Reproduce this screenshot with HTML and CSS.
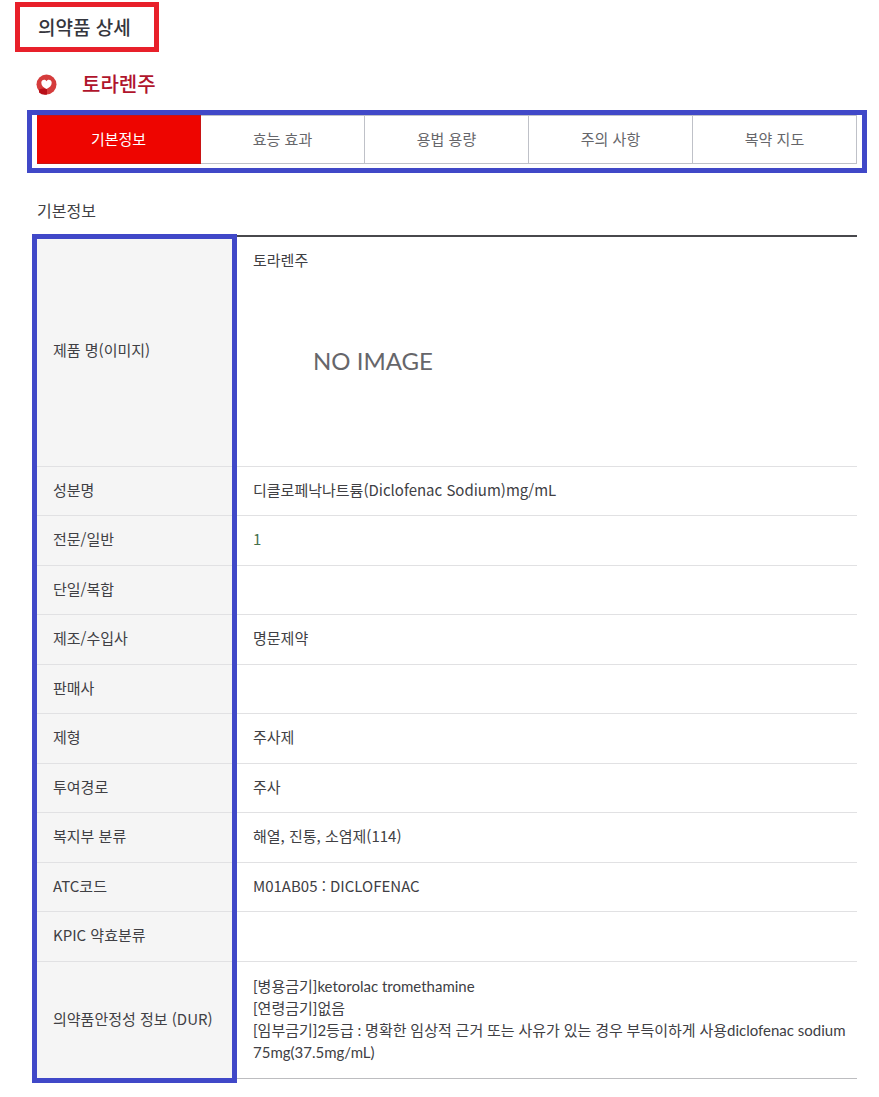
FILE: index.html
```
<!DOCTYPE html>
<html lang="ko">
<head>
<meta charset="utf-8">
<meta name="viewport" content="width=device-width, initial-scale=1">
<title>의약품 상세</title>
<link rel="stylesheet" href="styles.css">
</head>
<body>
<main class="page">
  <h1 class="page-title">의약품 상세</h1>
  <div class="product">
    <svg class="product-icon" viewBox="0 0 22 22" aria-hidden="true">
      <circle cx="10.5" cy="11.5" r="10" fill="#d53c3c"/>
      <path d="M3 16.5Q7 14.8 11 16V21.4Q6.5 22.5 3 19.5Z" fill="#b80f18"/>
      <path d="M10.5 16C7.5 14.8 5.3 12.6 5.3 9.8C5.3 6.8 8.8 5.8 10.5 8.2C12.2 5.8 15.7 6.8 15.7 9.8C15.7 12.6 13.5 14.8 10.5 16Z" fill="#fff"/>
    </svg>
    <h2 class="product-name">토라렌주</h2>
  </div>
  <nav class="tabs">
    <a class="tab tab-active" href="#basic" aria-current="page">기본정보</a>
    <a class="tab" href="#effect">효능 효과</a>
    <a class="tab" href="#dosage">용법 용량</a>
    <a class="tab" href="#caution">주의 사항</a>
    <a class="tab" href="#guide">복약 지도</a>
  </nav>
  <section class="details" id="basic">
    <h3 class="details-title">기본정보</h3>
    <div class="table-wrap">
      <table class="info">
        <tbody>
          <tr class="row-image"><th scope="row">제품 명(이미지)</th><td><div class="media"><span>토라렌주</span><div class="no-image">NO IMAGE</div></div></td></tr>
          <tr><th scope="row">성분명</th><td>디클로페낙나트륨(Diclofenac Sodium)mg/mL</td></tr>
          <tr><th scope="row">전문/일반</th><td><span class="code">1</span></td></tr>
          <tr><th scope="row">단일/복합</th><td></td></tr>
          <tr><th scope="row">제조/수입사</th><td>명문제약</td></tr>
          <tr><th scope="row">판매사</th><td></td></tr>
          <tr><th scope="row">제형</th><td>주사제</td></tr>
          <tr><th scope="row">투여경로</th><td>주사</td></tr>
          <tr><th scope="row">복지부 분류</th><td>해열, 진통, 소염제(114)</td></tr>
          <tr><th scope="row">ATC코드</th><td>M01AB05 : DICLOFENAC</td></tr>
          <tr><th scope="row">KPIC 약효분류</th><td></td></tr>
          <tr class="row-dur"><th scope="row">의약품안정성 정보 (DUR)</th><td>[병용금기]ketorolac tromethamine<br>[연령금기]없음<br>[임부금기]2등급 : 명확한 임상적 근거 또는 사유가 있는 경우 부득이하게 사용diclofenac sodium 75mg(37.5mg/mL)</td></tr>
        </tbody>
      </table>
      <div class="column-frame"></div>
    </div>
  </section>
</main>
</body>
</html>
```
FILE: styles.css
```
* { box-sizing: border-box; }

body {
  margin: 0;
  background: #fff;
  color: #404044;
  font-family: "Noto Sans CJK KR", sans-serif;
  font-size: 15px;
  line-height: 22px;
}

h1, h2, h3 { margin: 0; }

.page { padding: 2px 12px 14px 15px; }

.page-title {
  width: fit-content;
  padding: 5px 23px 5px 18px;
  border: 5px solid #e8202a;
  color: #35363d;
  font-size: 19px;
  font-weight: 500;
  line-height: 30px;
}

.product {
  display: flex;
  align-items: center;
  gap: 24px;
  margin: 17px 0 11px 21px;
}

.product-icon { width: 22px; height: 22px; }

.product-name {
  color: #b0142c;
  font-size: 20px;
  font-weight: 500;
  line-height: 30px;
}

.tabs {
  display: flex;
  margin-left: 12px;
  padding: 0 5px 4px;
  border: 5px solid #4048c8;
}

.tab {
  flex: 1;
  padding: 11px 0 12px;
  border: 1px solid #bfc1c8;
  border-left: 0;
  color: #66666a;
  text-align: center;
  text-decoration: none;
  line-height: 24px;
}

.tab-active {
  border-color: #c81414;
  background: #ee0500;
  color: #fff;
}

.details { margin: 25px 10px 0 22px; }

.details-title {
  margin-bottom: 13px;
  color: #404044;
  font-size: 16px;
  font-weight: 400;
  line-height: 24px;
}

.table-wrap { position: relative; }

.info {
  width: 100%;
  border-top: 2px solid #48484c;
  border-spacing: 0;
}

.info th, .info td {
  height: 50px;
  padding: 0 16px 3px;
  border-bottom: 1px solid #e1e1e3;
  font-weight: 400;
  text-align: left;
}

.info tr:nth-child(even) > * { height: 49px; }

.info th {
  width: 200px;
  background: #f5f5f5;
}

.info .row-image > * { height: 230px; }

.info tr.row-dur:last-child > * {
  height: 117px;
  border-bottom-color: #bdbdc0;
}

.info .row-dur td {
  padding-right: 4px;
  font-family: Lato, "Noto Sans CJK KR", sans-serif;
}

.info .row-image td { padding: 12px 16px; vertical-align: top; }

.media { display: grid; gap: 8px; }

.no-image {
  width: 240px;
  color: #66666a;
  font-family: Lato, sans-serif;
  font-size: 24px;
  line-height: 164px;
  text-align: center;
}

.code { color: #46704c; }

.column-frame {
  position: absolute;
  inset: -1px auto -4px -5px;
  width: 205px;
  border: 5px solid #4048c8;
  pointer-events: none;
}
```
